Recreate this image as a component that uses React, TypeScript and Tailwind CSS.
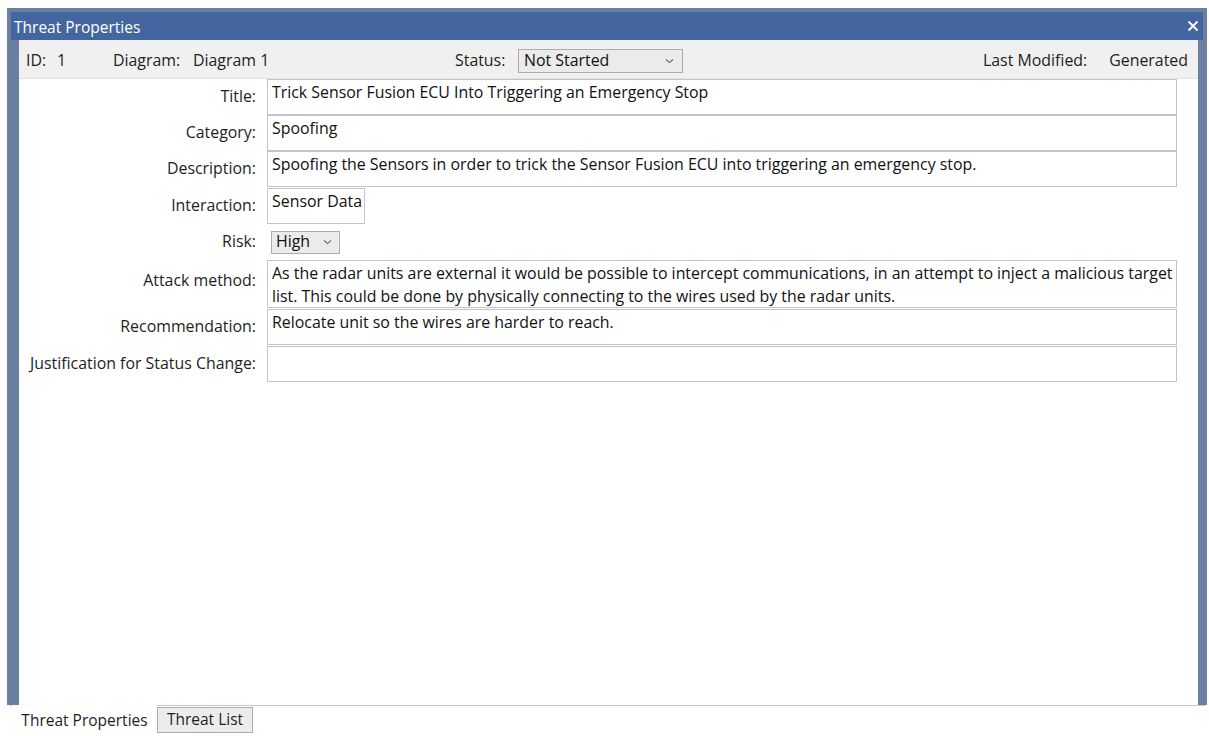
const FONT = "font-['Open_Sans','Noto_Sans',sans-serif]"

type Field = {
  label: string
  lines: string[]
  height: number
  gapAfter: number
}

const fields: Field[] = [
  { label: 'Title:', lines: ['Trick Sensor Fusion ECU Into Triggering an Emergency Stop'], height: 36, gapAfter: 0 },
  { label: 'Category:', lines: ['Spoofing'], height: 36, gapAfter: 0 },
  { label: 'Description:', lines: ['Spoofing the Sensors in order to trick the Sensor Fusion ECU into triggering an emergency stop.'], height: 36, gapAfter: 1 },
]

const lowerFields: Field[] = [
  {
    label: 'Attack method:',
    lines: [
      'As the radar units are external it would be possible to intercept communications, in an attempt to inject a malicious target',
      'list. This could be done by physically connecting to the wires used by the radar units.',
    ],
    height: 48,
    gapAfter: 1,
  },
  { label: 'Recommendation:', lines: ['Relocate unit so the wires are harder to reach.'], height: 36, gapAfter: 1 },
  { label: 'Justification for Status Change:', lines: [], height: 36, gapAfter: 0 },
]

function Chevron() {
  return (
    <svg width="9" height="6" viewBox="0 0 9 6" className="shrink-0">
      <path d="M1 1.5 L4.5 4.5 L8 1.5" fill="none" stroke="#707070" strokeWidth="1.1" />
    </svg>
  )
}

function Row({ f }: { f: Field }) {
  const tall = f.lines.length > 1
  return (
    <div className="flex items-center" style={{ height: f.height, marginBottom: f.gapAfter }}>
      <div className={`w-[237px] shrink-0 text-right text-[#1e1e1e] ${tall ? 'pb-[6px]' : ''}`}>{f.label}</div>
      <div className="ml-[11px] mr-[21px] h-full min-w-0 flex-1 overflow-hidden border border-[#c4c4c4] bg-white px-[4px] pt-[1px] leading-[23px] text-[#111]">
        {f.lines.map((l) => (
          <div key={l} className="whitespace-nowrap">{l}</div>
        ))}
      </div>
    </div>
  )
}

export default function App() {
  return (
    <div className={`relative h-[736px] w-[1209px] overflow-hidden bg-white text-[15.9px] ${FONT}`}>
      <div className="ml-[7px] mt-[8px] flex h-[697px] w-[1200px] flex-col bg-[#6b7fa3] px-[4px] pt-[4px]">
        {/* caption bar */}
        <div className="flex h-[28px] shrink-0 items-center justify-between bg-[#4466a0] pl-[3px] pr-[4px] pt-[3px]">
          <span className="text-[15.5px] text-white">Threat Properties</span>
          <svg width="12" height="12" viewBox="0 0 12 12" className="-mt-[3px]">
            <path d="M1.5 1.5 L10.5 10.5 M10.5 1.5 L1.5 10.5" stroke="white" strokeWidth="1.8" />
          </svg>
        </div>

        <div className="ml-[8px] mr-[5px] flex flex-1 flex-col bg-white">
          {/* header strip */}
          <div className="flex h-[39px] shrink-0 items-center border-b border-[#e3e3e3] bg-[#f0f0f0] pl-[7px] pr-[10px] pt-[3px] text-[#1e1e1e]">
            <span className="w-[31px]">ID:</span>
            <span className="w-[56px]">1</span>
            <span className="w-[80px]">Diagram:</span>
            <span className="w-[262px]">Diagram 1</span>
            <span className="w-[63px]">Status:</span>
            <div className="flex h-[24px] w-[165px] items-center justify-between border border-[#adadad] bg-[#ebebeb] pl-[5px] pr-[8px] text-[#111]">
              <span>Not Started</span>
              <Chevron />
            </div>
            <span className="ml-auto">Last Modified:</span>
            <span className="ml-[22px]">Generated</span>
          </div>

          {/* property fields */}
          <div className="flex flex-col">
            {fields.map((f) => (
              <Row key={f.label} f={f} />
            ))}
            <div className="flex h-[36px] items-center">
              <div className="w-[237px] shrink-0 text-right text-[#1e1e1e]">Interaction:</div>
              <div className="ml-[11px] h-full w-[98px] whitespace-nowrap border border-[#c4c4c4] px-[4px] pt-[1px] leading-[23px] text-[#111]">
                Sensor Data
              </div>
            </div>
            <div className="flex h-[36px] items-center">
              <div className="w-[237px] shrink-0 text-right text-[#1e1e1e]">Risk:</div>
              <div className="ml-[15px] flex h-[23px] w-[69px] items-center justify-between border border-[#adadad] bg-[#ebebeb] pl-[4px] pr-[7px] text-[#111]">
                <span>High</span>
                <Chevron />
              </div>
            </div>
            {lowerFields.map((f) => (
              <Row key={f.label} f={f} />
            ))}
          </div>
        </div>
      </div>

      {/* tab strip */}
      <div className="ml-[10px] flex h-[31px] w-[1195px] border-t border-[#c8c8c8] bg-white pt-px">
        <div className="-mt-[2px] ml-[2px] flex h-[29px] w-[145px] items-center justify-center bg-white pt-[2px] text-[15.5px] text-[#1e1e1e]">
          Threat Properties
        </div>
        <div className="flex h-[26px] w-[96px] items-center justify-center border border-[#acacac] bg-[#ececec] text-[15.5px] text-[#1e1e1e]">
          Threat List
        </div>
      </div>
    </div>
  )
}
